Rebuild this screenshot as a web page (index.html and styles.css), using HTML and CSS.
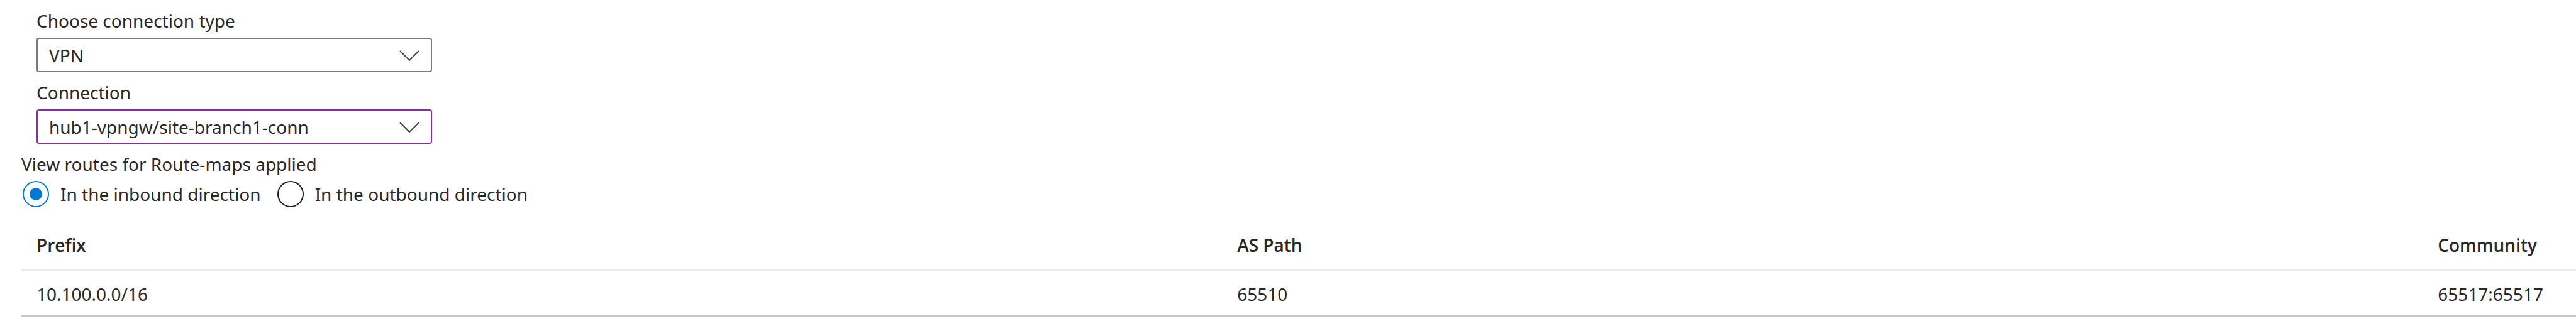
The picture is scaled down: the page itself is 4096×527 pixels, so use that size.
FILE: index.html
```html
<!DOCTYPE html>
<html lang="en">
<head>
<meta charset="utf-8">
<title>Route-maps</title>
<link rel="stylesheet" href="styles.css">
</head>
<body>
<main class="page">
  <form class="filters">
    <div class="field">
      <label for="connection-type">Choose connection type</label>
      <div class="dropdown">
        <select id="connection-type"><option>VPN</option></select>
        <svg class="chevron" viewBox="0 0 32 18" aria-hidden="true"><path d="M1 1 16 16 31 1"/></svg>
      </div>
    </div>
    <div class="field">
      <label for="connection">Connection</label>
      <div class="dropdown">
        <select id="connection" class="edited"><option>hub1-vpngw/site-branch1-conn</option></select>
        <svg class="chevron" viewBox="0 0 32 18" aria-hidden="true"><path d="M1 1 16 16 31 1"/></svg>
      </div>
    </div>
    <fieldset class="direction">
      <legend>View routes for Route-maps applied</legend>
      <div class="options">
        <label class="option"><input type="radio" name="direction" checked>In the inbound direction</label>
        <label class="option"><input type="radio" name="direction">In the outbound direction</label>
      </div>
    </fieldset>
  </form>
  <table class="routes">
    <thead>
      <tr><th class="wide" scope="col">Prefix</th><th class="wide" scope="col">AS Path</th><th scope="col">Community</th></tr>
    </thead>
    <tbody>
      <tr><td>10.100.0.0/16</td><td>65510</td><td>65517:65517</td></tr>
    </tbody>
  </table>
</main>
</body>
</html>
```
FILE: styles.css
```css
* {
  box-sizing: border-box;
}

body {
  margin: 0;
  background: #fff;
  color: #292827;
  font: 28px/38px "Noto Sans", "Open Sans", sans-serif;
}

.page {
  padding: 14px 0 0 34px;
}

.field {
  display: flex;
  flex-direction: column;
  gap: 8px;
  width: 653px;
  max-width: 100%;
  padding-left: 24px;
  margin-bottom: 13px;
}

.dropdown {
  position: relative;
}

.dropdown select {
  display: block;
  width: 100%;
  height: 55px;
  padding: 0 72px 0 18px;
  border: 2px solid #7c7a78;
  border-radius: 4px;
  background: #fff;
  color: inherit;
  font: inherit;
  appearance: none;
  outline: none;
}

.dropdown .edited {
  border-color: #8a2da5;
}

.chevron {
  position: absolute;
  top: 20px;
  right: 20px;
  width: 32px;
  height: 18px;
  fill: none;
  stroke: #444;
  stroke-width: 2;
  pointer-events: none;
}

.direction {
  margin: 0;
  padding: 0;
  border: 0;
}

.direction legend {
  padding: 0;
}

.options {
  display: flex;
  gap: 26px;
  padding: 8px 0 0 2px;
}

.option {
  display: flex;
  align-items: center;
  gap: 18px;
}

.option input {
  display: grid;
  place-items: center;
  width: 42px;
  height: 42px;
  margin: 0;
  border: 2px solid #201f1e;
  border-radius: 50%;
  appearance: none;
}

.option input:checked {
  border-color: #0078d4;
}

.option input:checked::before {
  content: "";
  width: 20px;
  height: 20px;
  border-radius: 50%;
  background: #0078d4;
}

.routes {
  width: 100%;
  margin-top: 24px;
  border-collapse: separate;
  border-spacing: 0;
  table-layout: fixed;
  text-align: left;
}

.routes .wide {
  width: 47%;
}

.routes th {
  padding: 17px 0 20px 24px;
  border-bottom: 2px solid #edebe9;
  font-family: "Open Sans", "Noto Sans", sans-serif;
  font-weight: 600;
}

.routes td {
  padding: 18px 0 15px 24px;
  border-bottom: 2px solid #c8c8c8;
}
```
